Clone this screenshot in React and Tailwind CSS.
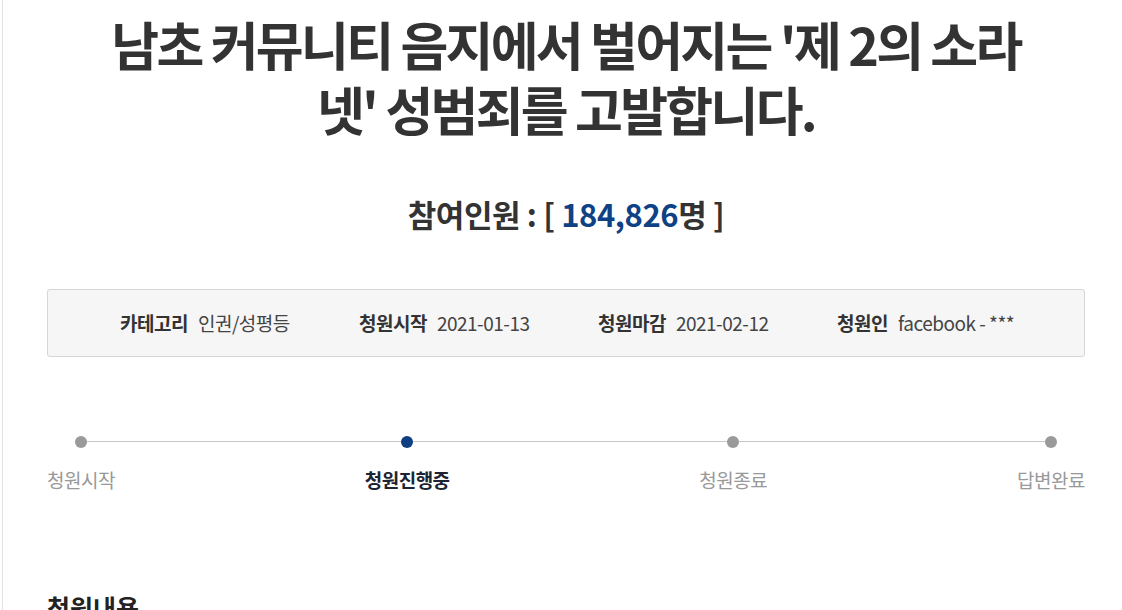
import React from "react";

const FONT = { fontFamily: '"Noto Sans CJK KR", "Noto Sans", sans-serif' };

const info = [
  { label: "카테고리", value: "인권/성평등" },
  { label: "청원시작", value: "2021-01-13" },
  { label: "청원마감", value: "2021-02-12" },
  { label: "청원인", value: "facebook - ***" },
];

const steps = [
  { name: "청원시작", active: false },
  { name: "청원진행중", active: true },
  { name: "청원종료", active: false },
  { name: "답변완료", active: false },
];

const App = () => {
  return (
    <div className="w-full h-[610px] overflow-hidden bg-white" style={FONT}>
      <div className="ml-[2px] w-[1127px] min-h-[610px] border-l border-[#e3e3e3] px-[44px] pt-[11px]">
        {/* Title */}
        <h1 className="text-center text-[52px] leading-[65px] font-bold tracking-[-2.7px] text-[#333]">
          남초 커뮤니티 음지에서 벌어지는 '제 2의 소라
          <br />
          넷' 성범죄를 고발합니다.
        </h1>

        {/* Participants */}
        <h2 className="mt-[53px] text-center text-[31px] leading-[40px] font-bold tracking-[-0.4px] text-[#333]">
          참여인원 : [ <span className="text-[#0f4185]">184,826</span>명 ]
        </h2>

        {/* Info box */}
        <div className="mt-[55px] h-[68px] rounded-[3px] border border-[#d6d6d6] bg-[#f6f6f6] pl-[72px] flex items-center">
          {info.map((it) => (
            <div
              key={it.label}
              className="w-[239px] flex items-center gap-[10px] text-[19px] tracking-[-0.5px] text-[#333]"
            >
              <span className="font-bold">{it.label}</span>
              <span className="text-[#444]">{it.value}</span>
            </div>
          ))}
        </div>

        {/* Progress */}
        <div className="relative mt-[79px] flex justify-between">
          <div className="absolute left-[34px] right-[34px] top-[5px] h-px bg-[#c8c8c8]" />
          {steps.map((s) => (
            <div key={s.name} className="relative flex flex-col items-center">
              <span
                className={
                  s.active
                    ? "w-[12px] h-[12px] rounded-full bg-[#0f3f82]"
                    : "w-[12px] h-[12px] rounded-full bg-[#9a9a9a]"
                }
              />
              <span
                className={
                  s.active
                    ? "mt-[19px] text-[19px] leading-[26px] tracking-[-0.5px] font-bold text-[#1d2433]"
                    : "mt-[19px] text-[19px] leading-[26px] tracking-[-0.5px] text-[#999]"
                }
              >
                {s.name}
              </span>
            </div>
          ))}
        </div>

        {/* Content heading */}
        <h3 className="mt-[98px] text-[25px] leading-[32px] font-bold text-[#222]">청원내용</h3>
      </div>
    </div>
  );
};

export default App;
